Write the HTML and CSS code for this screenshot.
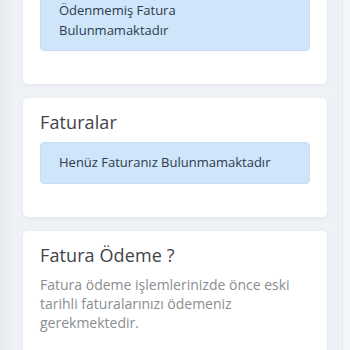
FILE: index.html
```html
<!DOCTYPE html>
<html lang="tr">
<head>
<meta charset="utf-8">
<link rel="stylesheet" href="styles.css">
</head>
<body>
<div class="page">
  <main class="content">
    <section class="card first">
      <h2 class="card-title">Ödemeler</h2>
      <div class="alert">Ödenmemiş Fatura<br>Bulunmamaktadır</div>
    </section>
    <section class="card">
      <h2 class="card-title">Faturalar</h2>
      <div class="alert">Henüz Faturanız Bulunmamaktadır</div>
    </section>
    <section class="card">
      <h2 class="card-title">Fatura Ödeme ?</h2>
      <p class="text">Fatura ödeme işlemlerinizde önce eski tarihli faturalarınızı ödemeniz gerekmektedir.</p>
      <p class="text">Henüz ödeme süresi dolmamış faturalarınızı da ödeyebilirsiniz.</p>
    </section>
  </main>
  <div class="edge"></div>
</div>
</body>
</html>
```
FILE: styles.css
```css
html, body {
  margin: 0;
  padding: 0;
  height: 100%;
  overflow: hidden;
}
body {
  background: #eef1f5;
  font-family: "Open Sans", "Noto Sans", sans-serif;
}
.page {
  display: flex;
  height: 100%;
}
.content {
  flex: 1;
  padding: 0 15px 0 23px;
  background: linear-gradient(to right, #e6eaee 0, #eef1f5 14px, #eef1f5 100%);
}
.edge {
  width: 7px;
  background: #f3f5f8;
  border-left: 1px solid #e6eaef;
}
.card {
  background: #fff;
  border-radius: 5px;
  box-shadow: 0 1px 4px rgba(40, 60, 90, 0.06);
  padding: 15px 17px 33px;
  margin-bottom: 14px;
}
.card.first {
  margin-top: -54px;
}
.card-title {
  margin: 0 0 10px;
  font-size: 18px;
  font-weight: 400;
  line-height: 19px;
  color: #3f4349;
  letter-spacing: 0.1px;
}
.alert {
  background: #cfe5fa;
  border: 1px solid #c6def4;
  border-radius: 4px;
  padding: 10px 18px;
  font-size: 13px;
  line-height: 19.5px;
  color: #2e3a4c;
}
.text {
  margin: 0 0 19px;
  font-size: 14px;
  line-height: 19px;
  color: #8a8d91;
}
```
